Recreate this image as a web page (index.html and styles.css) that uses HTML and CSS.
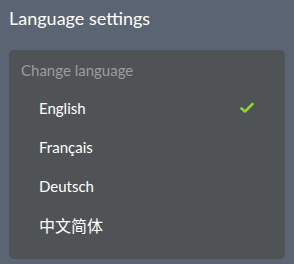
FILE: index.html
```html
<!DOCTYPE html>
<html lang="en">
  <head>
    <meta charset="UTF-8" />
    <title>Language settings</title>
    <link rel="stylesheet" href="styles.css">
  </head>
  <body>
    <div class="settings">
      <h1 class="settings-title">Language settings</h1>
      <div class="lang-panel">
        <div class="lang-label">Change language</div>
        <ul class="lang-list">
          <li class="lang-item selected">
            <span>English</span>
            <svg class="check" width="14" height="12" viewBox="0 0 14 12">
              <path d="M1.5 6.5 L5 9.5 L12.5 2" fill="none" stroke="#8dd42b" stroke-width="2.6" stroke-linecap="round" stroke-linejoin="round"/>
            </svg>
          </li>
          <li class="lang-item"><span>Français</span></li>
          <li class="lang-item"><span>Deutsch</span></li>
          <li class="lang-item"><span class="cjk">中文简体</span></li>
        </ul>
      </div>
    </div>
  </body>
</html>
```

FILE: styles.css
```css
html, body {
  margin: 0;
  padding: 0;
  background-color: #5a6472;
  font-family: Lato, "Noto Sans CJK SC", sans-serif;
}

.settings {
  padding: 4px 9px 7px 9px;
}

.settings-title {
  margin: 0;
  font-size: 18px;
  font-weight: 400;
  color: #ffffff;
  line-height: 28px;
}

.lang-panel {
  margin-top: 18px;
  background-color: #4f5356;
  border-radius: 5px;
  padding: 8px 0 15px 0;
}

.lang-label {
  padding: 0 12px;
  color: #9b9c9c;
  font-size: 15px;
  line-height: 24px;
}

.lang-list {
  list-style: none;
  margin: 6px 0 0 0;
  padding: 0;
}

.lang-item {
  display: flex;
  align-items: center;
  justify-content: space-between;
  height: 39px;
  padding: 0 31px 0 30px;
  color: #ffffff;
  font-size: 15px;
}

.cjk {
  font-size: 16px;
}

.check {
  display: block;
}
```
